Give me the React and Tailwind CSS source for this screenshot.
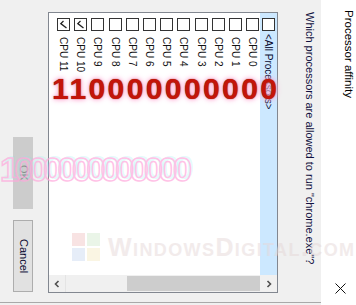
export default function App() {
  const cpus = [11, 10, 9, 8, 7, 6, 5, 4, 3, 2, 1, 0];
  const checked = new Set([11, 10]);

  const Box = ({ on }) => (
    <div className="w-[13px] h-[13px] flex-none border border-[#333333] bg-white ml-[3px]">
      {on && (
        <svg width="11" height="11" viewBox="0 0 11 11" className="block">
          <polyline points="5.5,2 2.8,4.6 8.5,9" fill="none" stroke="#222" strokeWidth="1.3" />
        </svg>
      )}
    </div>
  );

  return (
    <div className="relative w-[356px] h-[305px] overflow-hidden bg-[#f0f0f0] flex font-['Liberation_Sans',Arial,sans-serif]">
      <div className="flex w-[321px] h-[303px] border-b border-[#a9a9a9]">
        {/* left: buttons */}
        <div className="w-[48px] flex-none flex flex-col justify-end pl-[13px] pb-[10px] gap-[11px]">
          <div className="w-[20px] h-[72px] bg-[#cccccc] flex items-center justify-center">
            <span className="[writing-mode:vertical-rl] text-[11px] leading-[13px] text-[#8a8a8a]">OK</span>
          </div>
          <div className="w-[20px] h-[72px] bg-[#e1e1e1] border border-[#adadad] flex items-center justify-center">
            <span className="[writing-mode:vertical-rl] text-[11px] leading-[13px] text-[#0a0a30]">Cancel</span>
          </div>
        </div>

        {/* listbox */}
        <div className="mt-[12px] w-[230px] h-[281px] flex-none border border-[#828790] bg-white flex flex-col">
          <div className="flex-1 flex pl-[5px] overflow-hidden">
            {cpus.map((c) => (
              <div key={c} className="w-[17.2px] flex-none flex flex-col pt-[5px]">
                <Box on={checked.has(c)} />
                <span className="mt-[6px] ml-[3px] w-[13px] [writing-mode:vertical-rl] text-[10px] leading-[13px] text-[#111] whitespace-nowrap">
                  CPU {c}
                </span>
              </div>
            ))}
            <div className="w-[17.2px] flex-none flex flex-col pt-[5px] bg-[#cce8ff]">
              <div className="w-[13px] h-[13px] flex-none border border-[#333333] bg-white ml-[2px]" />
              <span className="mt-[3px] ml-[2px] w-[13px] [writing-mode:vertical-rl] text-[10px] leading-[13px] text-[#0a0a30] whitespace-nowrap">
                &lt;All Processors&gt;
              </span>
            </div>
          </div>
          {/* horizontal scrollbar */}
          <div className="h-[17px] flex-none flex bg-[#f0f0f0]">
            <div className="w-[17px] flex items-center justify-center border-r border-[#e4e4e4]">
              <svg width="6" height="8" viewBox="0 0 6 8">
                <polyline points="4.5,1 1.5,4 4.5,7" fill="none" stroke="#505050" strokeWidth="1.6" />
              </svg>
            </div>
            <div className="flex-1 flex pl-[61px] py-[1px]">
              <div className="flex-1 bg-[#cdcdcd]" />
            </div>
            <div className="w-[17px] flex items-center justify-center">
              <svg width="6" height="8" viewBox="0 0 6 8">
                <polyline points="1.5,1 4.5,4 1.5,7" fill="none" stroke="#505050" strokeWidth="1.6" />
              </svg>
            </div>
          </div>
        </div>

        {/* instruction text */}
        <div className="flex-1 pl-[24px] pt-[12px]">
          <span className="[writing-mode:vertical-rl] text-[11px] leading-[15px] text-[#101040] whitespace-nowrap">
            Which processors are allowed to run "chrome.exe"?
          </span>
        </div>
      </div>

      {/* title bar */}
      <div className="flex-1 bg-white flex flex-col justify-between pt-[10px] pb-[11px]">
        <span className="ml-[11px] [writing-mode:vertical-rl] text-[11.5px] leading-[15px] text-black whitespace-nowrap">
          Processor affinity
        </span>
        <svg width="11" height="11" viewBox="0 0 11 11" className="ml-[14px]">
          <path d="M0.5 0.5 L10.5 10.5 M10.5 0.5 L0.5 10.5" stroke="#111" strokeWidth="1" />
        </svg>
      </div>

      {/* watermark */}
      <div className="absolute left-[72px] top-[233px] flex items-center gap-[8px] pointer-events-none opacity-50">
        <svg width="28" height="28" viewBox="0 0 28 28">
          <rect x="0" y="0" width="13" height="13" fill="#f3c9c9" />
          <rect x="15" y="0" width="13" height="13" fill="#d6ecd2" />
          <rect x="0" y="15" width="13" height="13" fill="#cfdcf3" />
          <rect x="15" y="15" width="13" height="13" fill="#f6ecc8" />
        </svg>
        <span className="text-[25px] leading-[28px] font-bold [font-variant:small-caps] tracking-[1.4px] text-[#e6d8d8]">
          WindowsDigital.com
        </span>
      </div>

      {/* ghost glitch digits */}
      <div className="absolute left-[0px] top-[152px] text-[34px] leading-[34px] font-bold tracking-[-4.5px] text-transparent [-webkit-text-stroke:1.5px_#ffa8dc] [text-shadow:2px_-2px_0_rgba(130,240,240,0.3)] opacity-70 pointer-events-none whitespace-nowrap">
        1000000000000
      </div>

      {/* red annotation */}
      <div className="absolute left-[52px] top-[74px] text-[30px] leading-[30px] font-bold tracking-[2.4px] text-[#c4140a] [text-shadow:0_0_1px_#6b3000,0_0_4px_#ff9fcf,0_0_7px_#ffc0e0] pointer-events-none whitespace-nowrap">
        110000000000
      </div>
    </div>
  );
}
